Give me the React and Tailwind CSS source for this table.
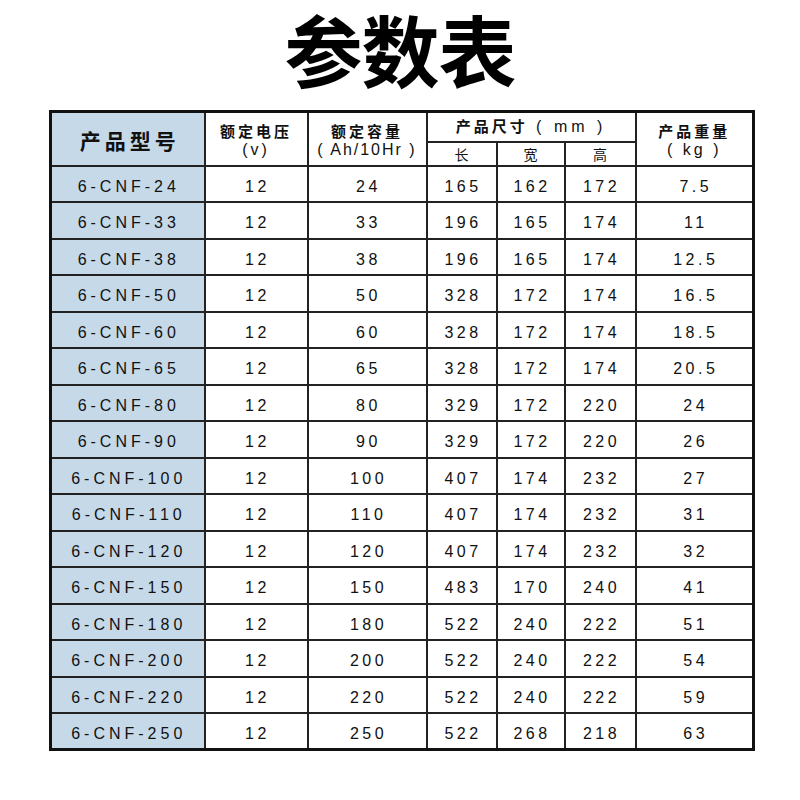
import React from "react";

const rows = [
  ["6-CNF-24", "12", "24", "165", "162", "172", "7.5"],
  ["6-CNF-33", "12", "33", "196", "165", "174", "11"],
  ["6-CNF-38", "12", "38", "196", "165", "174", "12.5"],
  ["6-CNF-50", "12", "50", "328", "172", "174", "16.5"],
  ["6-CNF-60", "12", "60", "328", "172", "174", "18.5"],
  ["6-CNF-65", "12", "65", "328", "172", "174", "20.5"],
  ["6-CNF-80", "12", "80", "329", "172", "220", "24"],
  ["6-CNF-90", "12", "90", "329", "172", "220", "26"],
  ["6-CNF-100", "12", "100", "407", "174", "232", "27"],
  ["6-CNF-110", "12", "110", "407", "174", "232", "31"],
  ["6-CNF-120", "12", "120", "407", "174", "232", "32"],
  ["6-CNF-150", "12", "150", "483", "170", "240", "41"],
  ["6-CNF-180", "12", "180", "522", "240", "222", "51"],
  ["6-CNF-200", "12", "200", "522", "240", "222", "54"],
  ["6-CNF-220", "12", "220", "522", "240", "222", "59"],
  ["6-CNF-250", "12", "250", "522", "268", "218", "63"],
];

const font = { fontFamily: '"Liberation Sans", "Noto Sans CJK SC", sans-serif' };
const cjk = { fontFamily: '"Noto Sans CJK SC", sans-serif' };

export default function App() {
  return (
    <div className="w-[800px] h-[800px] bg-white text-[#111]" style={font}>
      <div className="h-[110px] flex items-start justify-center">
        <div
          className="text-[78px] font-bold leading-[96px] tracking-[-1px] text-black"
          style={cjk}
        >
          参数表
        </div>
      </div>
      <div className="ml-[49px]">
        <table className="border-collapse border-[3px] border-[#111] table-fixed w-[703px]">
          <colgroup>
            <col className="w-[154px]" />
            <col className="w-[103px]" />
            <col className="w-[119px]" />
            <col className="w-[70px]" />
            <col className="w-[68px]" />
            <col className="w-[71px]" />
            <col className="w-[118px]" />
          </colgroup>
          <thead>
            <tr className="h-[30px]">
              <th
                rowSpan={2}
                className="bg-[#c6d9e9] border-2 border-[#222] text-[21px] font-bold tracking-[4px] pl-[4px] pt-[4px]"
                style={cjk}
              >
                产品型号
              </th>
              <th
                rowSpan={2}
                className="border-2 border-[#222] text-[15px] font-bold leading-[19px] tracking-[3px] pt-[2px]"
              >
                <div style={cjk}>额定电压</div>
                <div className="font-normal text-[16px]">(v)</div>
              </th>
              <th
                rowSpan={2}
                className="border-2 border-[#222] text-[15px] font-bold leading-[19px] tracking-[2px] pt-[2px]"
              >
                <div className="tracking-[3px]" style={cjk}>额定容量</div>
                <div className="font-normal text-[16px] whitespace-nowrap">( Ah/10Hr )</div>
              </th>
              <th
                colSpan={3}
                className="border-2 border-[#222] text-[15px] font-bold tracking-[3px]"
              >
                <span style={cjk}>产品尺寸</span>
                <span className="font-normal text-[16px] tracking-[4px]"> ( mm )</span>
              </th>
              <th
                rowSpan={2}
                className="border-2 border-[#222] text-[15px] font-bold leading-[19px] tracking-[3px] pt-[2px]"
              >
                <div style={cjk}>产品重量</div>
                <div className="font-normal text-[16px] tracking-[3px]">( kg )</div>
              </th>
            </tr>
            <tr className="h-[24px]">
              {["长", "宽", "高"].map((t) => (
                <th
                  key={t}
                  className="border-2 border-[#222] text-[14px] font-normal leading-none"
                  style={cjk}
                >
                  {t}
                </th>
              ))}
            </tr>
          </thead>
          <tbody>
            {rows.map((r) => (
              <tr key={r[0]} className="h-[36.5px]">
                {r.map((c, i) => (
                  <td
                    key={i}
                    className={
                      "border-2 border-[#222] text-center text-[16px] pt-[6px] leading-none " +
                      (i === 0 ? "bg-[#c6d9e9] pl-[2px] tracking-[4px]" : "pl-[3px] tracking-[3.5px]")
                    }
                  >
                    {c}
                  </td>
                ))}
              </tr>
            ))}
          </tbody>
        </table>
      </div>
    </div>
  );
}
